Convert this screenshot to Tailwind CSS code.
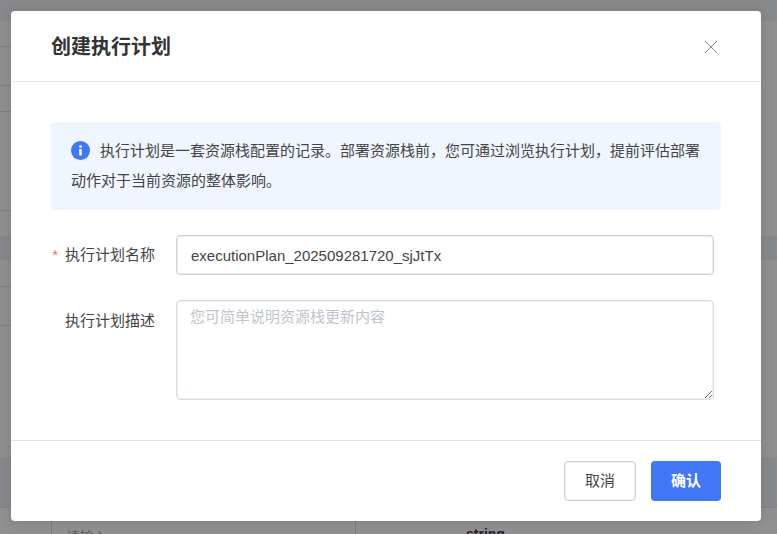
<!DOCTYPE html>
<html lang="zh-CN">
<head>
<meta charset="utf-8">
<script src="https://cdn.jsdelivr.net/npm/@tailwindcss/browser@4"></script>
<title>创建执行计划</title>
</head>
<body class="m-0 h-[534px] w-[777px] overflow-hidden bg-[#8f8f8f] font-['Liberation_Sans','Noto_Sans_CJK_SC',sans-serif]">
<div class="relative h-[534px] w-[777px] overflow-hidden">
  <div class="flex h-[534px] flex-col">
    <div class="h-[21px] shrink-0 bg-[#88898b]"></div>
    <div class="h-[26px] w-[40px] shrink-0 border-b border-[#7f7f7f]"></div>
    <div class="h-[39px] w-[40px] shrink-0 border-b border-[#7f7f7f]"></div>
    <div class="h-[26px] w-[40px] shrink-0 border-b border-[#7f7f7f]"></div>
    <div class="h-[99px] w-[40px] shrink-0 border-b border-[#7f7f7f]"></div>
    <div class="h-[25px] shrink-0"></div>
    <div class="h-[24px] shrink-0 bg-[#87888b]"></div>
    <div class="h-[27px] w-[40px] shrink-0 border-b border-[#7f7f7f]"></div>
    <div class="h-[39px] w-[40px] shrink-0 border-b border-[#7f7f7f]"></div>
    <div class="h-[131px] shrink-0"></div>
    <div class="h-[51px] shrink-0 border-b border-[#808183] bg-[#87888b]"></div>
    <div class="flex flex-1">
      <div class="ml-[51px] h-[26px] w-[305px] shrink-0 border-l border-r border-[#7a7a7a] pl-[14px] pt-[19px] text-[14px] leading-[20px] text-[#5c5c5c]">请输入</div>
      <div class="h-[26px] w-[300px] shrink-0 pl-[110px] pt-[16px] text-[14px] font-bold leading-[20px] text-[#222]">string</div>
    </div>
  </div>
  <div class="absolute left-[11px] top-[11px] flex h-[510px] w-[750px] flex-col rounded-[4px] bg-white shadow-[0_0_12px_rgba(0,0,0,0.12)]">
    <header class="flex h-[71px] shrink-0 items-center justify-between border-b border-[#e5e7eb] pl-[40px] pr-[43px] pt-[2px]">
      <h2 class="text-[20px] font-bold leading-[24px] text-[#333]">创建执行计划</h2>
      <svg width="14" height="14" viewBox="0 0 14 14" fill="none" stroke="#8a8a8a" stroke-width="1"><path d="M1 1l12 12M13 1L1 13"/></svg>
    </header>
    <main class="flex-1 px-[40px] pt-[40px]">
      <div class="h-[88px] rounded-[4px] bg-[#eff6ff] px-[20px] py-[14px] text-[15px] leading-[30px] text-[#444]">
        <svg class="mr-[10px] inline-block h-[19px] w-[19px] align-[-4px]" viewBox="0 0 19 19"><circle cx="9.5" cy="9.5" r="9.5" fill="#3f77f6"/><circle cx="9.5" cy="5.6" r="1.4" fill="#fff"/><rect x="8.2" y="8" width="2.6" height="6.6" rx=".5" fill="#fff"/></svg>执行计划是一套资源栈配置的记录。部署资源栈前&#xFF0C;您可通过浏览执行计划&#xFF0C;提前评估部署动作对于当前资源的整体影响。
      </div>
      <div class="mt-[25px] flex items-center">
        <label class="w-[105px] shrink-0 whitespace-nowrap pr-[1px] text-right text-[15px] text-[#444]"><span class="mr-[7px] text-[#f56c6c]">*</span>执行计划名称</label>
        <input class="ml-[20px] h-[40px] w-[538px] rounded-[4px] border border-[#d2d2d2] px-[14px] text-[15px] text-[#444] shadow-[inset_0_0_0_1px_#ededed] outline-none" value="executionPlan_202509281720_sjJtTx">
      </div>
      <div class="mt-[25px] flex items-start">
        <label class="w-[105px] shrink-0 whitespace-nowrap pr-[1px] pt-[10px] text-right text-[15px] text-[#444]">执行计划描述</label>
        <textarea class="ml-[20px] h-[100px] w-[538px] rounded-[4px] border border-[#d8dbe6] px-[13px] py-[6px] text-[15px] leading-[20px] text-[#444] shadow-[inset_0_0_0_1px_#f0f1f6] outline-none placeholder:text-[#c0c4cc]" placeholder="您可简单说明资源栈更新内容"></textarea>
      </div>
    </main>
    <footer class="flex h-[81px] shrink-0 items-center justify-end gap-[15px] border-t border-[#e4e2f0] pr-[40px]">
      <button class="h-[40px] w-[72px] rounded-[4px] border border-[#d2d2d2] bg-white text-[15px] text-[#444] shadow-[inset_0_0_0_1px_#f0f0f0]">取消</button>
      <button class="h-[40px] w-[70px] rounded-[4px] bg-[#3f77f6] text-[15px] font-bold text-white">确认</button>
    </footer>
  </div>
</div>
</body>
</html>
